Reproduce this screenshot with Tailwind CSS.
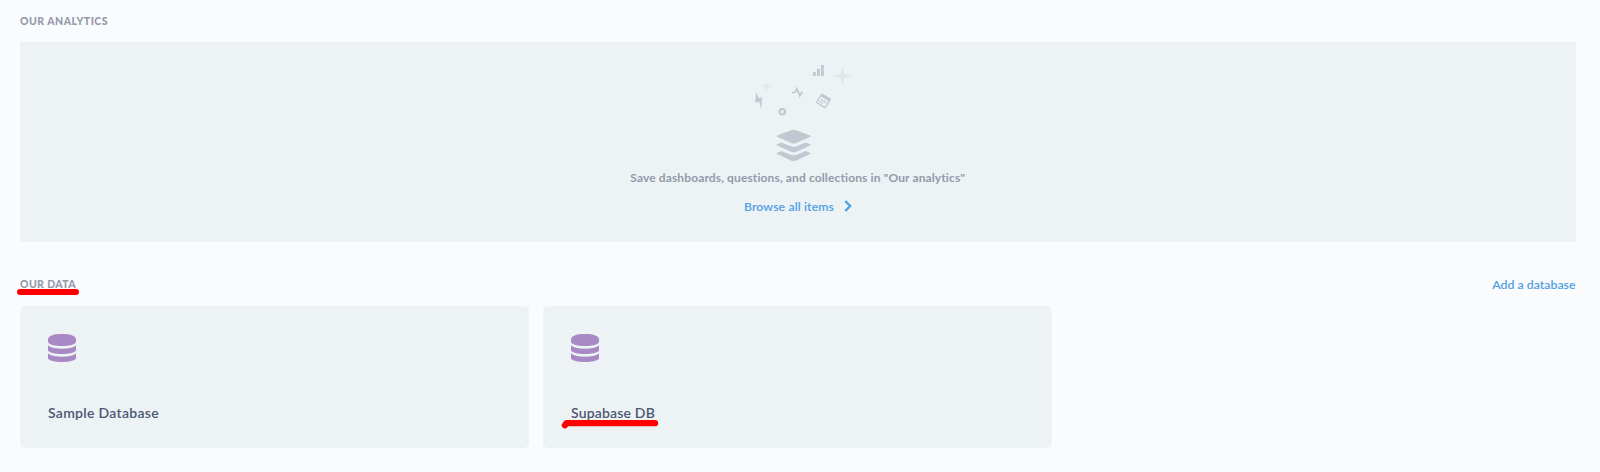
<!DOCTYPE html>
<html lang="en">
<head>
<meta charset="utf-8">
<title>Our analytics</title>
<script src="https://cdn.jsdelivr.net/npm/@tailwindcss/browser@4"></script>
</head>
<body class="h-[472px] overflow-hidden bg-[#fafbfd] font-['Lato',sans-serif] text-[#949aab] [font-variant-ligatures:none]">
<svg class="hidden"><symbol id="database" viewBox="0 0 28 28"><path d="M0 5.500C0 2 5 0 14 0s14 2 14 5.500v2.500C27 10.800 21 12 14 12S1 10.800 0 8Z"/><path d="M0 11.500c3 2.300 8 3.200 14 3.200s11-.9 14-3.200v4.700c-1 2.700-7 3.700-14 3.700s-13-1-14-3.700Z"/><path d="M0 19.600C3 21.800 8 22.800 14 22.800s11-.8 14-3.200v4.700C27 27 21 28 14 28S1 27 0 24.300Z"/></symbol></svg>
<main class="flex flex-col pl-5 pr-[24.500px] pt-[13px]">
  <h2 class="h-[29px] text-[10.500px] leading-4 font-black tracking-[0.480px] whitespace-nowrap">OUR ANALYTICS</h2>
  <section class="flex h-[200px] flex-col items-center bg-[#edf2f5] pt-[18px]">
    <svg class="h-[105px] w-[120px] shrink-0" viewBox="738 60 120 105" fill="#c1c8d1">
      <path d="M813 72h2.800v4H813zM817 68.700h2.800V76H817zM821 65h2.800v11H821z"/>
      <path fill="#e2e7eb" d="M842.500 67l2.100 6.900 6.900 2.100-6.900 2.100-2.100 7.400-2.100-7.400-6.900-2.100 6.900-2.100ZM766.500 80.200l1.200 4.600 4.600 1.200-4.600 1.200-1.200 4.600-1.200-4.600-4.600-1.200 4.600-1.200Z"/>
      <path d="M756.300 92.700l2.400 6 3.300-1.400-1.200 10.400-1.100-6-4.100.6Z" stroke="#c1c8d1" stroke-width=".5"/>
      <path d="M792 92.500h3l2-4 2.800 7.300 1.700-3.300h1.500" fill="none" stroke="#c1c8d1" stroke-width="1.700"/>
      <circle cx="782.300" cy="111.700" r="2.700" fill="none" stroke="#c1c8d1" stroke-width="2.200"/>
      <g transform="translate(823.500 100.800) rotate(32)" fill="none" stroke="#c1c8d1"><rect x="-5" y="-5" width="10" height="10" rx=".7" stroke-width="1.400"/><path d="M-5-3.500H5" stroke-width="2.200"/><path d="M-3 0H3M-3 2.500H1" stroke-width="1.200"/></g>
      <path d="M777.200 135.500l13.800-5.200q2.600-.9 5.200 0l14 5.200q1 .5 0 1.300l-14 6.200q-2.600 1-5.200 0l-13.800-6.200q-1-.8 0-1.300Z"/>
      <path d="M777 144.200l4.300-1.800 10 4q2.300.8 4.600 0l10-4 4.300 1.800q1 .6 0 1.200l-13.800 6.300q-2.700 1-5.400 0l-14-6.300q-1-.6 0-1.200Z"/>
      <path d="M777 152.900l4.300-1.800 10 4q2.300.8 4.600 0l10-4 4.300 1.800q1 .6 0 1.200l-13.800 6.300q-2.700 1-5.400 0l-14-6.300q-1-.6 0-1.200Z"/>
    </svg>
    <p class="mt-[3px] text-[12px] leading-5 font-bold tracking-[0.120px] whitespace-nowrap">Save dashboards, questions, and collections in "Our analytics"</p>
    <a class="mt-[9px] flex items-center gap-[9.500px] text-[12.250px] leading-5 font-semibold tracking-[0.110px] whitespace-nowrap text-[#509ee3]">Browse all items
      <svg class="h-3 w-2 -translate-y-px" viewBox="0 0 8 12" fill="none" stroke="currentColor" stroke-width="2.300"><path d="m1.300 1 4.900 5-4.900 5"/></svg></a>
  </section>
  <div class="mt-[34px] flex h-[29.500px] justify-between whitespace-nowrap">
    <h2 class="relative text-[10.500px] leading-4 font-black tracking-[0.380px]">OUR DATA<span class="absolute top-[12.700px] -left-[3.300px] h-[6.700px] w-[62.500px] rounded-full bg-[#ff0000]"></span></h2>
    <a class="text-[12.250px] leading-[18px] font-semibold tracking-[0.030px] text-[#509ee3]">Add a database</a>
  </div>
  <section class="flex gap-[13.700px] text-[14px] leading-5 font-semibold tracking-[0.300px] whitespace-nowrap text-[#4c5773]">
    <article class="flex h-[142.500px] w-[509.300px] flex-col rounded-[5px] bg-[#edf2f5] px-7 pt-7"><svg class="h-7 w-7" fill="#a989c5"><use href="#database"/></svg><h3 class="mt-[41px]">Sample Database</h3></article>
    <article class="relative flex h-[142.500px] w-[509.300px] flex-col rounded-[5px] bg-[#edf2f5] px-7 pt-7"><svg class="h-7 w-7" fill="#a989c5"><use href="#database"/></svg><h3 class="mt-[41px] tracking-[0.180px]">Supabase DB</h3>
      <svg class="absolute top-[112px] left-[17px] h-[12px] w-[102px]" viewBox="0 0 102 12" fill="none" stroke="#ff0000" stroke-width="6.300" stroke-linecap="round" stroke-linejoin="round"><path d="M4.900 7.200 6.500 5.200H95"/></svg></article>
  </section>
</main>
</body>
</html>
